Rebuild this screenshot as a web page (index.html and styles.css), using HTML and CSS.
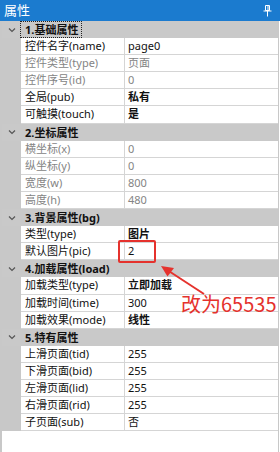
FILE: index.html
```html
<!DOCTYPE html>
<html>
<head>
<meta charset="utf-8">
<link rel="stylesheet" href="styles.css">
</head>
<body>
<div class="panel">
  <div class="titlebar">
    <span class="title">属性</span>
    <svg class="pin" width="9" height="12" viewBox="0 0 9 12"><path d="M2.5 0.5h4v5h-4z" fill="none" stroke="#fff" stroke-width="1"/><path d="M5 1v4.5" stroke="#fff" stroke-width="1"/><path d="M0.5 6h8" stroke="#fff" stroke-width="1"/><path d="M4.5 6v5.5" stroke="#fff" stroke-width="1"/></svg>
  </div>
  <div class="grid">
    <div class="cat"><span class="chev"><svg width="8" height="6" viewBox="0 0 8 6"><path d="M1 1.5l3 3 3-3" fill="none" stroke="#555" stroke-width="1.2"/></svg></span><span class="cat-label focus">1.基础属性</span></div>
    <div class="row"><span class="m"></span><span class="k">控件名字(name)</span><span class="v">page0</span></div>
    <div class="row ro"><span class="m"></span><span class="k">控件类型(type)</span><span class="v">页面</span></div>
    <div class="row ro"><span class="m"></span><span class="k">控件序号(id)</span><span class="v">0</span></div>
    <div class="row"><span class="m"></span><span class="k">全局(pub)</span><span class="v b">私有</span></div>
    <div class="row"><span class="m"></span><span class="k">可触摸(touch)</span><span class="v b">是</span></div>

    <div class="cat"><span class="chev"><svg width="8" height="6" viewBox="0 0 8 6"><path d="M1 1.5l3 3 3-3" fill="none" stroke="#555" stroke-width="1.2"/></svg></span><span class="cat-label">2.坐标属性</span></div>
    <div class="row ro"><span class="m"></span><span class="k">横坐标(x)</span><span class="v">0</span></div>
    <div class="row ro"><span class="m"></span><span class="k">纵坐标(y)</span><span class="v">0</span></div>
    <div class="row ro"><span class="m"></span><span class="k">宽度(w)</span><span class="v">800</span></div>
    <div class="row ro"><span class="m"></span><span class="k">高度(h)</span><span class="v">480</span></div>

    <div class="cat"><span class="chev"><svg width="8" height="6" viewBox="0 0 8 6"><path d="M1 1.5l3 3 3-3" fill="none" stroke="#555" stroke-width="1.2"/></svg></span><span class="cat-label">3.背景属性(bg)</span></div>
    <div class="row"><span class="m"></span><span class="k">类型(type)</span><span class="v b">图片</span></div>
    <div class="row"><span class="m"></span><span class="k">默认图片(pic)</span><span class="v">2</span></div>

    <div class="cat"><span class="chev"><svg width="8" height="6" viewBox="0 0 8 6"><path d="M1 1.5l3 3 3-3" fill="none" stroke="#555" stroke-width="1.2"/></svg></span><span class="cat-label">4.加载属性(load)</span></div>
    <div class="row"><span class="m"></span><span class="k">加载类型(type)</span><span class="v b">立即加载</span></div>
    <div class="row"><span class="m"></span><span class="k">加载时间(time)</span><span class="v">300</span></div>
    <div class="row"><span class="m"></span><span class="k">加载效果(mode)</span><span class="v b">线性</span></div>

    <div class="cat"><span class="chev"><svg width="8" height="6" viewBox="0 0 8 6"><path d="M1 1.5l3 3 3-3" fill="none" stroke="#555" stroke-width="1.2"/></svg></span><span class="cat-label">5.特有属性</span></div>
    <div class="row"><span class="m"></span><span class="k">上滑页面(tid)</span><span class="v">255</span></div>
    <div class="row"><span class="m"></span><span class="k">下滑页面(bid)</span><span class="v">255</span></div>
    <div class="row"><span class="m"></span><span class="k">左滑页面(lid)</span><span class="v">255</span></div>
    <div class="row"><span class="m"></span><span class="k">右滑页面(rid)</span><span class="v">255</span></div>
    <div class="row"><span class="m"></span><span class="k">子页面(sub)</span><span class="v">否</span></div>
    <div class="filler"></div>
  </div>

  <div class="redbox"></div>
  <svg class="arrow" width="60" height="40" viewBox="155 260 60 40"><path d="M204 294 L168 270.5" stroke="#e5322d" stroke-width="2" fill="none"/><path d="M161 266 L174 268 L167.5 276.5 Z" fill="#e5322d"/></svg>
  <div class="note">改为65535</div>
</div>
</body>
</html>
```

FILE: styles.css
```css
html, body {
  margin: 0;
  padding: 0;
  background: #ffffff;
}
body {
  width: 280px;
  height: 452px;
  overflow: hidden;
  font-family: "Noto Sans", "Noto Sans CJK SC", sans-serif;
  font-size: 11px;
  color: #111;
}
.panel {
  position: relative;
  width: 280px;
  height: 452px;
  display: flex;
  flex-direction: column;
}
.titlebar {
  height: 21px;
  background: #1b7bcf;
  color: #fff;
  display: flex;
  align-items: center;
  justify-content: space-between;
  padding: 0 8px 0 4px;
  flex: none;
}
.title {
  font-size: 13px;
  line-height: 21px;
}
.pin {
  display: block;
  margin-top: 1px;
}
.grid {
  flex: 1;
  width: 276px;
  border-left: 2px solid #c8c8c8;
  border-right: 1px solid #c8c8c8;
  display: flex;
  flex-direction: column;
}
.row, .cat {
  height: 17.1px;
  box-sizing: border-box;
  flex: none;
  display: grid;
  grid-template-columns: 19px 104px 1fr;
  line-height: 16px;
}
.cat {
  background: #c9c9c9;
  grid-template-columns: 19px 1fr;
  font-weight: bold;
  align-items: center;
}
.chev {
  display: flex;
  justify-content: center;
  align-items: center;
  padding-left: 1px;
}
.chev svg { display: block; }
.cat-label {
  padding-left: 4px;
  line-height: 15px;
  justify-self: start;
}
.focus {
  outline: 1px dotted #222;
  outline-offset: 0;
  padding-right: 3px;
}
.m {
  background: #c8c8c8;
}
.k {
  border-bottom: 1px solid #d5d5d5;
  border-right: 1px solid #d5d5d5;
  padding-left: 4px;
  white-space: nowrap;
  overflow: hidden;
}
.v {
  border-bottom: 1px solid #d5d5d5;
  padding-left: 3px;
  white-space: nowrap;
}
.ro .k, .ro .v {
  color: #848484;
}
.b {
  font-weight: bold;
}
.filler {
  flex: 1;
}
.redbox {
  position: absolute;
  left: 118px;
  top: 240px;
  width: 38px;
  height: 23px;
  box-sizing: border-box;
  border: 2px solid #e5322d;
  border-radius: 2px;
}
.arrow {
  position: absolute;
  left: 155px;
  top: 260px;
}
.note {
  position: absolute;
  left: 181px;
  top: 292px;
  font-size: 20px;
  line-height: 24px;
  color: #e5322d;
  font-family: "Noto Sans CJK SC", sans-serif;
}
```
